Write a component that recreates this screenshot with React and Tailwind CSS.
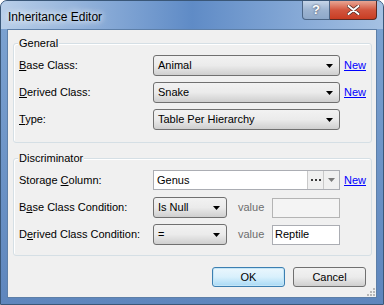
import React from "react";

const font = { fontFamily: '"Liberation Sans", Arial, sans-serif' };

const Arrow = ({ color = "#000" }) => (
  <svg width="7" height="4" viewBox="0 0 7 4">
    <path d="M0 0h7L3.5 4z" fill={color} />
  </svg>
);

const Combo = ({ value, width }) => (
  <div
    className={`${width} h-[21px] flex items-center justify-between pl-[4px] pr-[6px] border border-[#707070] rounded-[3px] bg-gradient-to-b from-[#f2f2f2] via-[#ebebeb] to-[#cfcfcf] text-[11px] text-black`}
  >
    <span>{value}</span>
    <Arrow />
  </div>
);

const NewLink = () => (
  <a href="#" className="ml-[4px] text-[11px] text-[#0000ff] underline">
    New
  </a>
);

const Label = ({ pre, u, post, w = "w-[134px]" }) => (
  <div className={`${w} text-[11px] text-black`}>
    {pre}
    <span className="underline">{u}</span>
    {post}
  </div>
);

const Group = ({ title, children, className }) => (
  <div
    className={`relative border border-[#d5dfe5] rounded-[3px] shadow-[inset_1px_1px_0_#fff] ${className}`}
  >
    <span className="absolute -top-[8px] left-[4px] px-[1px] bg-[#f0f0f0] text-[11px] text-black leading-[14px]">
      {title}
    </span>
    {children}
  </div>
);

export default function App() {
  return (
    <div
      style={font}
      className="w-[384px] h-[305px] flex flex-col rounded-t-[7px] border border-[#3a5778] bg-gradient-to-b from-[#7ea4d2] to-[#5e86bd] overflow-hidden"
    >
      {/* Title bar */}
      <div className="relative h-[28px] flex items-start bg-gradient-to-r from-[#b9cfe9] via-[#5f8bc6] to-[#a5c1e3]">
        <div className="pl-[7px] pt-[7px] text-[12px] text-black [text-shadow:0_0_6px_#fff,0_0_10px_#fff]">
          Inheritance Editor
        </div>
        <div className="ml-auto mr-[6px] flex">
          <div className="w-[28px] h-[19px] flex items-center justify-center rounded-bl-[4px] border border-t-0 border-[#4c6686] bg-gradient-to-b from-[#c6d5e8] via-[#9db4d1] to-[#8ea8c9] text-white text-[13px] font-bold [text-shadow:0_0_2px_#334]">
            ?
          </div>
          <div className="w-[47px] h-[19px] flex items-center justify-center rounded-br-[4px] border border-t-0 border-l-0 border-[#5a2a24] bg-gradient-to-b from-[#e7a594] via-[#d2553e] to-[#c83c22]">
            <svg width="13" height="10" viewBox="0 0 13 10">
              <path d="M1.5 1l10 8M11.5 1l-10 8" stroke="#4b2a25" strokeWidth="3.4" strokeLinecap="round" />
              <path d="M1.5 1l10 8M11.5 1l-10 8" stroke="#fff" strokeWidth="2" strokeLinecap="round" />
            </svg>
          </div>
        </div>
      </div>

      {/* Client area */}
      <div className="mx-[6px] h-[269px] flex flex-col relative border border-[#5d7fa8] bg-[#f0f0f0] px-[5px] pt-[13px]">
        <Group title="General" className="h-[100px] w-[359px] pt-[11px]">
          <div className="flex flex-col gap-[6px] pl-[5px]">
            <div className="flex items-center h-[21px]">
              <Label u="B" post="ase Class:" />
              <Combo value="Animal" width="w-[187px]" />
              <NewLink />
            </div>
            <div className="flex items-center h-[21px]">
              <Label u="D" post="erived Class:" />
              <Combo value="Snake" width="w-[187px]" />
              <NewLink />
            </div>
            <div className="flex items-center h-[21px]">
              <Label u="T" post="ype:" />
              <Combo value="Table Per Hierarchy" width="w-[187px]" />
            </div>
          </div>
        </Group>

        <Group title="Discriminator" className="mt-[15px] h-[98px] w-[359px] pt-[11px]">
          <div className="flex flex-col pl-[5px]">
            <div className="flex items-center h-[20px]">
              <Label pre="Storage " u="C" post="olumn:" />
              <div className="w-[187px] h-[20px] flex border border-[#abadb3] bg-white text-[11px]">
                <div className="flex-1 flex items-center pl-[3px]">Genus</div>
                <div className="w-[16px] flex items-center justify-center bg-[#f0f0f0] border-l border-[#c9c9c9]">
                  <svg width="10" height="2" viewBox="0 0 10 2">
                    <rect x="0" y="0" width="2" height="2" fill="#3c3c3c" />
                    <rect x="4" y="0" width="2" height="2" fill="#3c3c3c" />
                    <rect x="8" y="0" width="2" height="2" fill="#3c3c3c" />
                  </svg>
                </div>
                <div className="w-[16px] flex items-center justify-center bg-[#f0f0f0] border-l border-[#c9c9c9]">
                  <Arrow color="#7a7a7a" />
                </div>
              </div>
              <NewLink />
            </div>
            <div className="flex items-center h-[21px] mt-[7px]">
              <Label pre="B" u="a" post="se Class Condition:" />
              <Combo value="Is Null" width="w-[74px]" />
              <div className="ml-[11px] w-[34px] text-[11px] text-[#6d6d6d]">value</div>
              <div className="w-[68px] h-[20px] border border-[#b4b4b4] bg-[#f4f4f4]" />
            </div>
            <div className="flex items-center h-[21px] mt-[6px]">
              <Label pre="D" u="e" post="rived Class Condition:" />
              <Combo value="=" width="w-[74px]" />
              <div className="ml-[11px] w-[34px] text-[11px] text-[#6d6d6d]">value</div>
              <div className="w-[68px] h-[20px] flex items-center pl-[2px] border border-[#abadb3] bg-white text-[11px]">
                Reptile
              </div>
            </div>
          </div>
        </Group>

        <div className="mt-[11px] flex justify-end gap-[8px] pr-[5px]">
          <button className="w-[73px] h-[20px] rounded-[3px] border border-[#3c7fb1] bg-gradient-to-b from-[#eaf6fd] via-[#d9f0fc] to-[#a7d9f5] text-[11px] text-black shadow-[inset_0_0_0_1px_#c4e5f6]">
            OK
          </button>
          <button className="w-[73px] h-[20px] rounded-[3px] border border-[#707070] bg-gradient-to-b from-[#f2f2f2] via-[#ebebeb] to-[#cfcfcf] text-[11px] text-black">
            Cancel
          </button>
        </div>

        {/* resize grip */}
        <svg className="absolute right-[1px] bottom-[1px]" width="10" height="10" viewBox="0 0 10 10">
          {[[8, 2], [8, 5], [5, 5], [8, 8], [5, 8], [2, 8]].map(([x, y], i) => (
            <rect key={i} x={x} y={y} width="2" height="2" fill="#b8b8b8" />
          ))}
        </svg>
      </div>
    </div>
  );
}
